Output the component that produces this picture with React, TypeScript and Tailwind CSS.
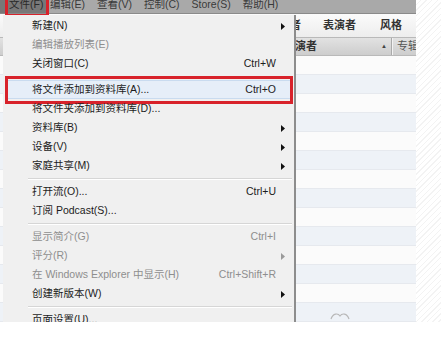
import React from "react";

type Item =
  | { sep: true }
  | {
      sep?: false;
      label: string;
      shortcut?: string;
      arrow?: boolean;
      disabled?: boolean;
      active?: boolean;
    };

const menuItems: Item[] = [
  { label: "新建(N)", arrow: true },
  { label: "编辑播放列表(E)", disabled: true },
  { label: "关闭窗口(C)", shortcut: "Ctrl+W" },
  { sep: true },
  { label: "将文件添加到资料库(A)...", shortcut: "Ctrl+O", active: true },
  { label: "将文件夹添加到资料库(D)..." },
  { label: "资料库(B)", arrow: true },
  { label: "设备(V)", arrow: true },
  { label: "家庭共享(M)", arrow: true },
  { sep: true },
  { label: "打开流(O)...", shortcut: "Ctrl+U" },
  { label: "订阅 Podcast(S)..." },
  { sep: true },
  { label: "显示简介(G)", shortcut: "Ctrl+I", disabled: true },
  { label: "评分(R)", arrow: true, disabled: true },
  { label: "在 Windows Explorer 中显示(H)", shortcut: "Ctrl+Shift+R", disabled: true },
  { label: "创建新版本(W)", arrow: true },
  { sep: true },
  { label: "页面设置(U)..." },
];

const menuBar = ["编辑(E)", "查看(V)", "控制(C)", "Store(S)", "帮助(H)"];

function Arrow({ disabled }: { disabled?: boolean }) {
  return (
    <svg width="4" height="7" viewBox="0 0 4 7" className="absolute right-[5px] top-[6px]">
      <path d="M0 0 L4 3.5 L0 7 Z" fill={disabled ? "#9a9a9a" : "#111"} />
    </svg>
  );
}

function MenuRow({ item }: { item: Exclude<Item, { sep: true }> }) {
  return (
    <div
      className={
        "relative mx-[3px] h-[19px] flex items-center justify-between pl-[25px] pr-[14px] border whitespace-nowrap " +
        (item.active ? "bg-[#e6eef8] border-[#c9dbef]" : "border-transparent")
      }
    >
      <span className={item.disabled ? "text-[#8e8e8e]" : "text-[#1c1c1c]"}>{item.label}</span>
      {item.shortcut && (
        <span className={item.disabled ? "text-[#8e8e8e]" : "text-[#1c1c1c]"}>{item.shortcut}</span>
      )}
      {item.arrow && <Arrow disabled={item.disabled} />}
      {item.active && (
        <div className="absolute -top-[5px] -bottom-[6px] -left-[2px] -right-[3px] border-[3px] border-[#d8222b]" />
      )}
    </div>
  );
}

export default function App() {
  const rows = Array.from({ length: 14 });

  return (
    <div className="w-[441px] h-[343px] bg-white font-['Liberation_Sans','Noto_Sans_CJK_SC',sans-serif] text-[10.5px]">
      <div className="relative h-[322px] flex overflow-hidden">
        <div className="w-[416px] shrink-0 flex flex-col">
          {/* menu bar, top half cut off as in the capture */}
          <div className="relative h-[15px] bg-[#a9a9a9] border-b border-[#8a8a8a] flex overflow-hidden text-[#3a3a3a] whitespace-nowrap">
            <div className="w-[48px] h-[15px] bg-[#787878] shrink-0" />
            <div className="flex gap-[12px] pl-[2px] -mt-[3px] leading-[15px]">
              {menuBar.map((m) => (
                <span key={m}>{m}</span>
              ))}
            </div>
            <span className="absolute left-[9px] -top-[3px] leading-[15px] text-[#2a2a2a]">文件(F)</span>
          </div>

          {/* column browser header */}
          <div className="h-[25px] flex items-center whitespace-nowrap bg-gradient-to-b from-[#fbfbfb] to-[#ededed] font-bold text-[11px] text-[#333]">
            <span className="ml-[268px] shrink-0">作曲者</span>
            <span className="ml-[22px] shrink-0">表演者</span>
            <span className="ml-[24px] shrink-0">风格</span>
          </div>

          {/* list header */}
          <div className="h-[20px] flex items-center whitespace-nowrap overflow-hidden bg-gradient-to-b from-[#e2e2e2] to-[#cdcdcd] border-y border-[#b9b9b9] font-bold text-[11px] text-[#333]">
            <span className="ml-[284px] shrink-0 w-[97px]">表演者</span>
            <span className="shrink-0 text-[6px] text-[#444]">▲</span>
            <span className="ml-[4px] shrink-0 h-full border-l border-[#aaaaaa] border-r border-r-[#f2f2f2]" />
            <span className="ml-[4px] shrink-0 font-normal text-[#555]">专辑</span>
          </div>

          <div className="flex-1 flex flex-col">
            {rows.map((_, i) => (
              <div
                key={i}
                className={
                  "h-[19px] shrink-0 border-b border-[#e6e9ee] " + (i % 2 === 0 ? "bg-[#fbfbfb]" : "bg-[#eef2f7]")
                }
              >
                {i === 13 && (
                  <svg width="20" height="8" viewBox="0 0 20 8" className="ml-[330px] mt-[9px]">
                    <path d="M1 7 C3 1 8 1 10 4 C12 1 17 1 19 7" fill="none" stroke="#b8b8b8" strokeWidth="1.2" />
                  </svg>
                )}
              </div>
            ))}
          </div>
        </div>

        <div className="flex-1 bg-[repeating-linear-gradient(135deg,#ffffff_0px,#ffffff_3px,#f3f3f3_3px,#f3f3f3_4px)]" />

        {/* red mark on File menu */}
        <div className="absolute left-[5px] top-0 w-[44px] h-[17px] border-[3px] border-t-0 border-[#d8222b]" />

        {/* dropdown menu */}
        <div className="absolute left-[3px] top-[15px] w-[293px] pt-[1px] bg-[#f0f0f0] border-r-2 border-[#8d8d8d]">
          {menuItems.map((item, i) =>
            item.sep ? (
              <div key={i} className="h-[7px] flex items-center">
                <div className="ml-[25px] mr-[2px] flex-1 border-t border-[#d6d6d6] border-b border-b-white" />
              </div>
            ) : (
              <MenuRow key={i} item={item} />
            )
          )}
        </div>
      </div>
    </div>
  );
}
